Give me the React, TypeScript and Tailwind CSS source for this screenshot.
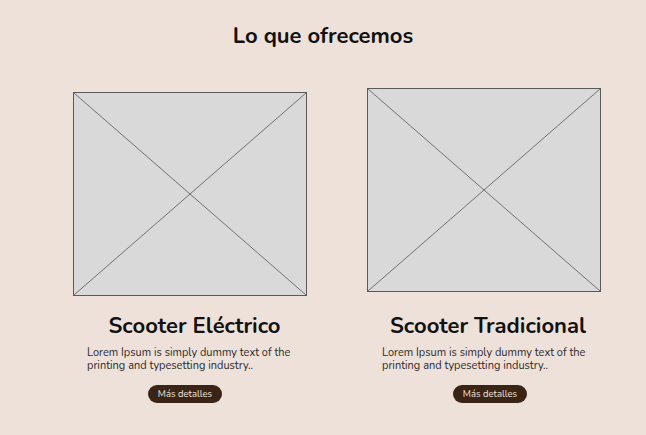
import React from "react";

function Placeholder() {
  return (
    <div className="w-[234px] h-[204px] bg-[#d9d9d9] border border-[#5a5a5a] relative">
      <svg className="absolute inset-0 w-full h-full" viewBox="0 0 234 204" preserveAspectRatio="none">
        <line x1="0" y1="0" x2="234" y2="204" stroke="#555" strokeWidth="0.8" />
        <line x1="234" y1="0" x2="0" y2="204" stroke="#555" strokeWidth="0.8" />
      </svg>
    </div>
  );
}

function Card({ title, titleShift, textShift, btnShift, top, gapTop }: { title: string; titleShift: string; textShift: string; btnShift: string; top: string; gapTop: string }) {
  return (
    <div className={`flex flex-col w-[234px] ${top}`}>
      <Placeholder />
      <h2 className={`${gapTop} text-center text-[22px] leading-[26px] font-bold text-[#111] whitespace-nowrap ${titleShift}`}>{title}</h2>
      <p className={`mt-[7px] text-[11px] leading-[13px] text-[#2a2a2a] w-[215px] ${textShift}`}>
        Lorem Ipsum is simply dummy text of the printing and typesetting industry..
      </p>
      <div className={`mt-[13px] flex justify-center ${btnShift}`}>
        <button className="h-[18px] px-[10px] rounded-full bg-[#3a2416] text-[#f2e6df] text-[9.5px] leading-[18px]">
          Más detalles
        </button>
      </div>
    </div>
  );
}

export default function App() {
  return (
    <div className="w-[646px] h-[435px] bg-[#eee1da] overflow-hidden" style={{ fontFamily: "Nunito, Lato, 'Open Sans', sans-serif" }}>
      <h1 className="pt-[22px] text-center text-[22px] leading-[28px] font-bold text-[#111]">Lo que ofrecemos</h1>
      <div className="flex pl-[73px] gap-[60px]">
        <Card title="Scooter Eléctrico" top="mt-[42px]" gapTop="mt-[17px]" titleShift="ml-[9px]" textShift="ml-[14px]" btnShift="-ml-[10px]" />
        <Card title="Scooter Tradicional" top="mt-[38px]" gapTop="mt-[21px]" titleShift="ml-[8px]" textShift="ml-[15px]" btnShift="ml-[12px]" />
      </div>
    </div>
  );
}
